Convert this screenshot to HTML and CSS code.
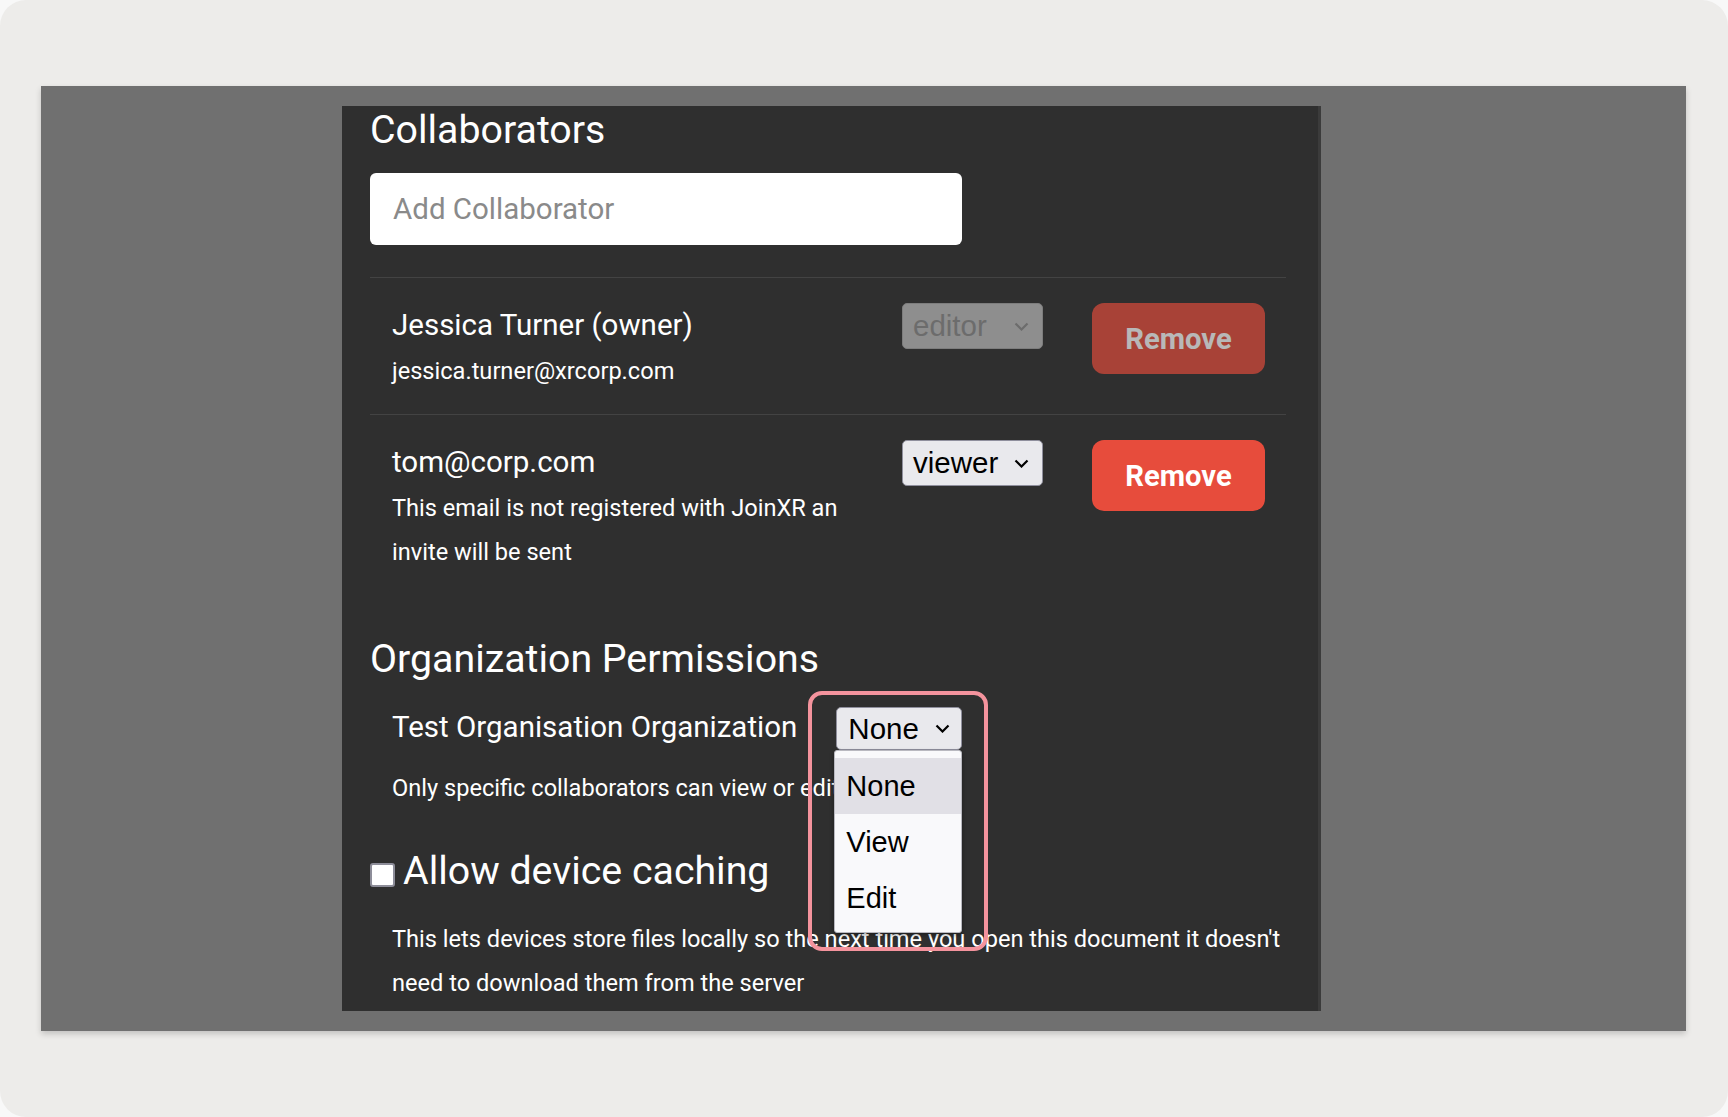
FILE: index.html
```html
<!DOCTYPE html>
<html lang="en">

<head>
    <meta charset="UTF-8">
    <meta name="viewport" content="width=device-width, initial-scale=1.0">
    <title>Document Sharing</title>
    <link rel="stylesheet" href="styles.css">
</head>

<body>
    <div class="frame">
        <div class="stage">
            <div class="panel">
                <h2 class="section-title">Collaborators</h2>
                <input type="text" class="add-input" placeholder="Add Collaborator">

                <div class="collab-list">
                    <div class="collab-row">
                        <div class="collab-info">
                            <div class="collab-name">Jessica Turner (owner)</div>
                            <div class="collab-note">jessica.turner@xrcorp.com</div>
                        </div>
                        <div class="select-box select-box--disabled role-select">
                            <span>editor</span>
                            <svg width="15" height="9" viewBox="0 0 15 9"><path d="M1.5 1.5l6 6 6-6" fill="none" stroke="currentColor" stroke-width="2.2"/></svg>
                        </div>
                        <button class="remove-btn" disabled>Remove</button>
                    </div>

                    <div class="collab-row">
                        <div class="collab-info">
                            <div class="collab-name">tom@corp.com</div>
                            <div class="collab-note">This email is not registered with JoinXR an invite will be sent</div>
                        </div>
                        <div class="select-box role-select">
                            <span>viewer</span>
                            <svg width="15" height="9" viewBox="0 0 15 9"><path d="M1.5 1.5l6 6 6-6" fill="none" stroke="currentColor" stroke-width="2.2"/></svg>
                        </div>
                        <button class="remove-btn">Remove</button>
                    </div>
                </div>

                <h2 class="section-title org-title">Organization Permissions</h2>
                <div class="org-row">
                    <div class="org-name">Test Organisation Organization</div>
                    <div class="org-select-wrap">
                        <div class="select-box org-select">
                            <span>None</span>
                            <svg width="15" height="9" viewBox="0 0 15 9"><path d="M1.5 1.5l6 6 6-6" fill="none" stroke="currentColor" stroke-width="2.2"/></svg>
                        </div>
                        <ul class="dropdown">
                            <li class="selected">None</li>
                            <li>View</li>
                            <li>Edit</li>
                        </ul>
                        <div class="highlight"></div>
                    </div>
                </div>
                <p class="help-text org-help">Only specific collaborators can view or edit</p>

                <label class="cache-row">
                    <span class="checkbox"></span>
                    <span class="cache-label">Allow device caching</span>
                </label>
                <p class="help-text cache-text">This lets devices store files locally so the next time you open this document it doesn't need to download them from the server</p>
            </div>
        </div>
    </div>
</body>

</html>
```

FILE: styles.css
```css
body {
    margin: 0;
    background-color: #f8f8f8;
    font-family: Roboto, "Liberation Sans", sans-serif;
}

.frame {
    height: 1117px;
    box-sizing: border-box;
    padding: 86px 42px 0 41px;
    background-color: #edecea;
    border-radius: 26px;
}

.stage {
    height: 945px;
    box-sizing: border-box;
    padding: 20px 0 0 301px;
    background-color: #707070;
    box-shadow: 0 3px 6px rgba(0, 0, 0, 0.18);
}

.panel {
    position: relative;
    width: 979px;
    height: 905px;
    box-sizing: border-box;
    padding: 3px 32px 0 28px;
    background-color: #2f2f2f;
    border-right: 3px solid #3b3b3b;
    overflow: hidden;
    color: #ffffff;
}

.section-title {
    margin: 0;
    font-size: 39.3px;
    font-weight: 400;
    line-height: 43px;
}

.add-input {
    display: block;
    width: 592px;
    height: 72px;
    margin-top: 21px;
    padding: 0 23px;
    box-sizing: border-box;
    border: none;
    border-radius: 6px;
    font-family: Roboto, sans-serif;
    font-size: 29.5px;
    color: #222;
}

.add-input::placeholder {
    color: #8a8a8a;
}

.collab-list {
    margin-top: 32px;
}

.collab-row {
    display: flex;
    align-items: flex-start;
    padding: 25px 21px 21px 22px;
    border-top: 1px solid #434343;
}

.collab-info {
    flex: 1;
    padding: 2px 30px 0 0;
}

.collab-name {
    font-size: 29.5px;
    line-height: 41px;
}

.collab-note {
    margin-top: 3px;
    font-size: 23.6px;
    line-height: 44px;
}

.select-box {
    display: flex;
    align-items: center;
    justify-content: space-between;
    box-sizing: border-box;
    background-color: #e9e9ed;
    border: 1px solid #8f8f9d;
    border-radius: 5px;
    color: #000;
    font-family: "Liberation Sans", Arial, sans-serif;
    font-size: 29.5px;
}

.role-select {
    width: 141px;
    height: 46px;
    padding: 0 13px 0 10px;
}

.select-box--disabled {
    background-color: #8e8e8e;
    border-color: #7d7d7d;
    color: #6c6c6c;
}

.remove-btn {
    width: 173px;
    height: 71px;
    margin-left: 49px;
    border: none;
    border-radius: 12px;
    background-color: #e74c3c;
    color: #ffffff;
    font-family: Roboto, sans-serif;
    font-size: 29.2px;
    font-weight: 700;
    cursor: pointer;
}

.remove-btn:disabled {
    opacity: 0.66;
    cursor: default;
}

.org-title {
    margin-top: 43px;
}

.org-row {
    display: flex;
    align-items: flex-start;
    margin-top: 26px;
    padding-left: 22px;
}

.org-name {
    font-size: 29.5px;
    line-height: 41px;
}

.org-select-wrap {
    position: relative;
    margin-left: 39px;
}

.org-select {
    width: 126px;
    height: 43px;
    padding: 0 11px 0 11px;
}

.dropdown {
    position: absolute;
    top: 43px;
    left: -2px;
    width: 128px;
    margin: 0;
    padding: 7px 0 6px;
    box-sizing: border-box;
    list-style: none;
    background-color: #f9f9fb;
    border: 1px solid #b9b9c0;
    border-radius: 3px;
    box-shadow: 0 2px 4px rgba(0, 0, 0, 0.35);
    color: #000;
    font-family: "Liberation Sans", Arial, sans-serif;
    font-size: 29px;
    z-index: 2;
}

.dropdown li {
    height: 56px;
    line-height: 56px;
    padding-left: 11px;
}

.dropdown li.selected {
    background-color: #e1e0e6;
}

.highlight {
    position: absolute;
    top: -16px;
    left: -28px;
    width: 180px;
    height: 260px;
    box-sizing: border-box;
    border: 4px solid #f4939d;
    border-radius: 14px;
    z-index: 3;
}

.help-text {
    margin: 0;
    padding-left: 22px;
    font-size: 23.6px;
    line-height: 44px;
}

.org-help {
    margin-top: 16px;
}

.cache-row {
    display: flex;
    align-items: center;
    margin-top: 40px;
}

.checkbox {
    width: 25px;
    height: 24px;
    margin-top: 7px;
    margin-right: 8px;
    box-sizing: border-box;
    background-color: #ffffff;
    border: 2px solid #8d8d99;
    border-radius: 3px;
}

.cache-label {
    font-size: 39.3px;
    line-height: 43px;
}

.cache-text {
    margin-top: 24px;
}
```
